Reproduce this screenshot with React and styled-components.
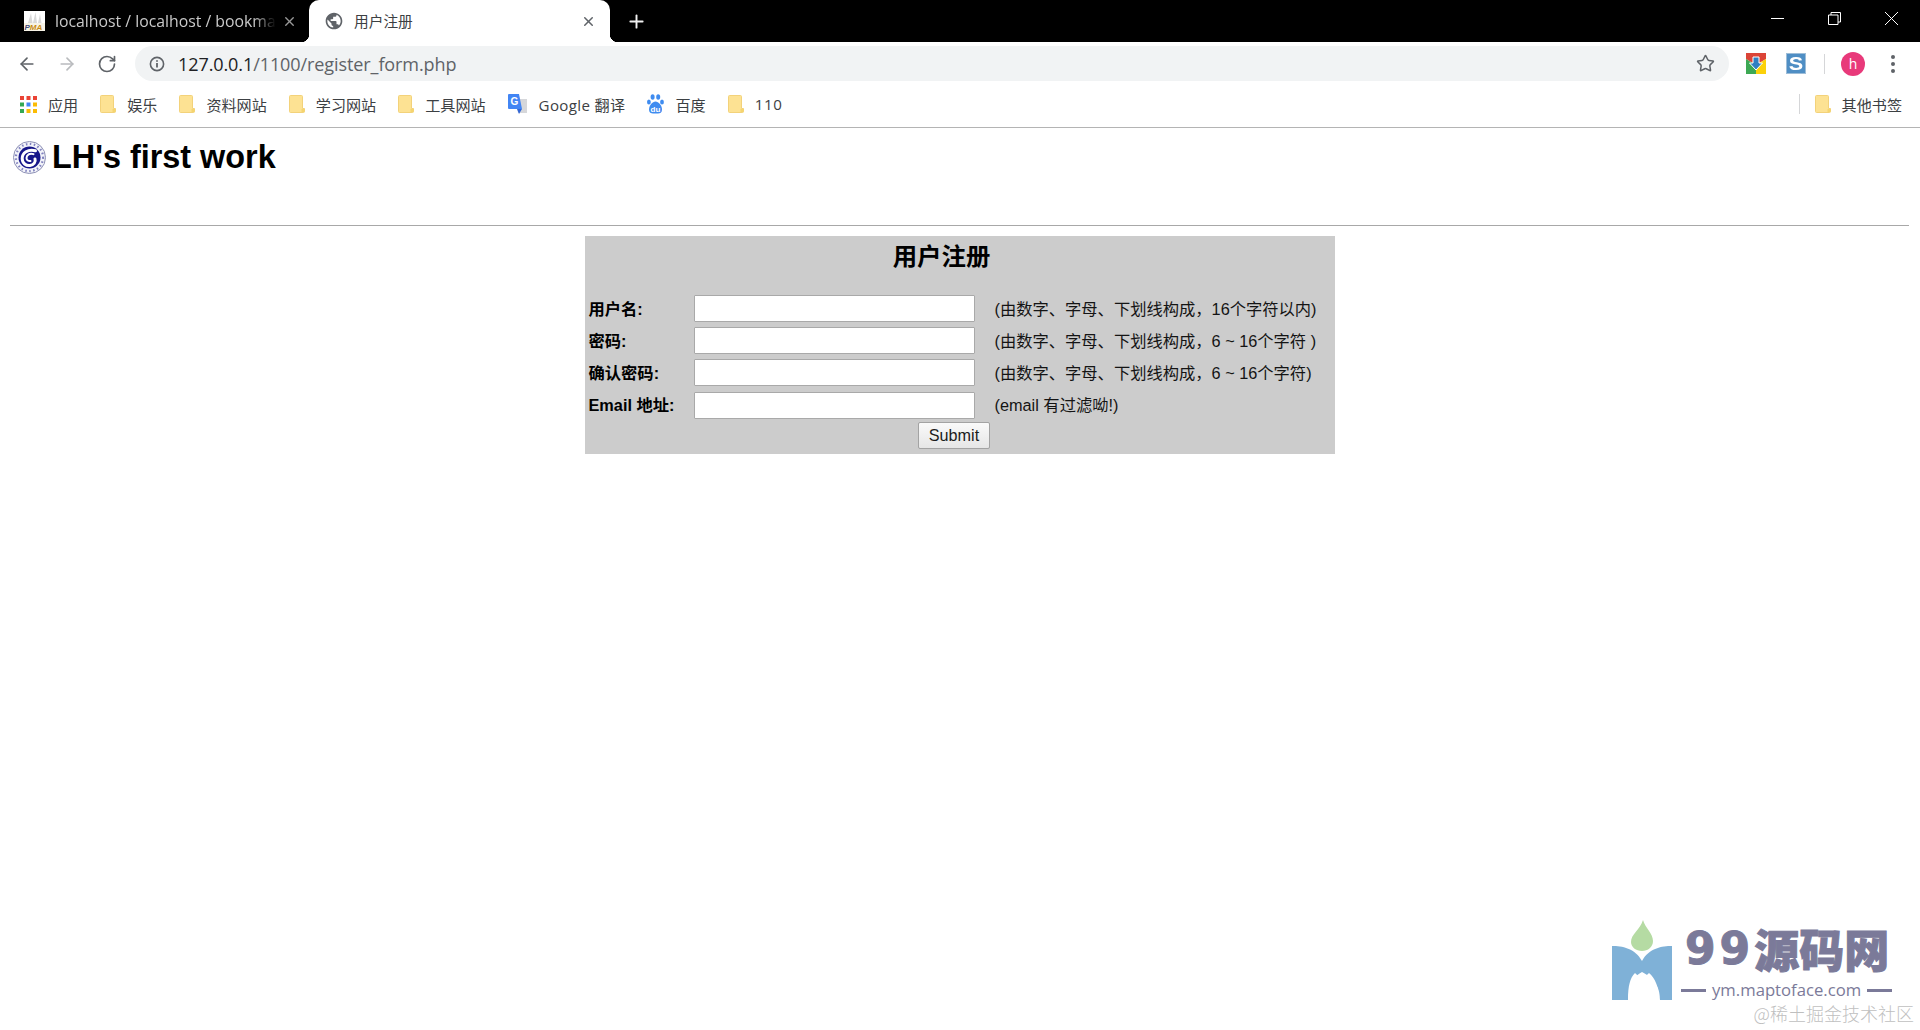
import React from 'react';
import styled, { createGlobalStyle } from 'styled-components';
import { ArrowLeft, ArrowRight, RotateCw, Star, X, Plus } from 'lucide-react';

const Global = createGlobalStyle`
  html, body { margin: 0; padding: 0; background: #fff; }
  * { box-sizing: border-box; }
`;
const UI_FONT = `"Open Sans", "Noto Sans CJK SC", sans-serif`;
const PAGE_FONT = `"Liberation Sans", "Noto Sans CJK SC", sans-serif`;

const Shell = styled.div`position: relative; width: 1920px; height: 1030px; overflow: hidden; background: #fff; font-family: ${PAGE_FONT};`;
const TabStrip = styled.div`display: flex; align-items: stretch; height: 42px; background: #000;`;
const Tab = styled.div`
  position: relative; display: flex; align-items: center; height: 42px; font-family: ${UI_FONT};
  width: ${p => p.$active ? '301px' : '309px'};
  padding: ${p => p.$active ? '0 14px 0 15px' : '0 12px 0 24px'};
  background: ${p => p.$active ? '#fff' : 'transparent'};
  border-radius: ${p => p.$active ? '10px 10px 0 0' : '0'};
  color: ${p => p.$active ? '#3c4043' : '#c9c9c9'};
  ${p => p.$active && `
    &::before, &::after { content: ''; position: absolute; bottom: 0; width: 8px; height: 8px; }
    &::before { left: -8px; background: radial-gradient(circle at 0 0, #000 8px, #fff 8.5px); }
    &::after { right: -8px; background: radial-gradient(circle at 100% 0, #000 8px, #fff 8.5px); }
  `}
`;
const TabTitle = styled.span`
  flex: 1; min-width: 0; margin: 0 ${p => p.$fade ? 6 : 12}px ${p => p.$fade ? 0 : 2}px ${p => p.$gap}px; font-size: ${p => p.$size}px; white-space: nowrap; overflow: hidden;
  ${p => p.$fade && `mask-image: linear-gradient(to right, #000 90%, transparent 100%);`}
`;
const NewTab = styled.div`display: flex; align-items: center; justify-content: center; width: 48px; padding-left: 4px; color: #f1f1f1;`;
const WindowControls = styled.div`display: flex; align-items: center; margin-left: auto; padding: 0 22px 5px 0; gap: 44px; color: #fff;`;
const Toolbar = styled.div`display: flex; align-items: center; height: 43px; padding: 0 25px 0 17px; background: #fff;`;
const NavButtons = styled.div`display: flex; gap: 20px; color: #5f6368;`;
const NavIcon = styled.span`display: flex; width: 20px; height: 20px; color: ${p => p.$muted ? '#b9bbbe' : '#5f6368'};`;
const Address = styled.div`
  flex: 1; display: flex; align-items: center; height: 35px; margin: 0 17px 0 18px; padding: 0 14px 0 14px;
  border-radius: 18px; background: #f1f3f4; font-family: ${UI_FONT}; font-size: 18.05px;
`;
const Url = styled.span`flex: 1; margin-left: 13px; color: #202124; letter-spacing: -.1px; em { font-style: normal; color: #5f6368; }`;
const Extensions = styled.div`display: flex; align-items: center;`;
const ScriptBadge = styled.div`
  width: 20px; height: 21px; margin-left: 20px; display: flex; align-items: center; justify-content: center;
  background: #4f8ec4; border: 1.5px solid #9dbdd8; color: #fff; font: 900 18px/18px "Liberation Sans", sans-serif;
  span { display: block; transform: scale(1.2, 1.05); }
`;
const Divider = styled.div`width: 1px; height: 20px; margin: 0 16px 0 18px; background: #d5d6d8;`;
const Avatar = styled.div`
  width: 24px; height: 24px; border-radius: 50%; background: #e8397a; color: #fff; display: flex; align-items: center;
  justify-content: center; font: 14px/1 ${UI_FONT};
`;
const Kebab = styled.div`
  display: flex; flex-direction: column; gap: 3px; margin-left: 26px;
  span { width: 4px; height: 4px; border-radius: 50%; background: #5f6368; }
`;
const Bookmarks = styled.div`
  display: flex; align-items: center; height: 43px; padding: 0 18px 4px 20px; gap: 22px; background: #fff;
  border-bottom: 1px solid #b4b4b4; font-family: ${UI_FONT}; font-size: 15.1px; color: #3c4043;
`;
const Bookmark = styled.div`display: flex; align-items: center; gap: 11px; white-space: nowrap;`;
const BookmarkEnd = styled.div`display: flex; align-items: center; margin-left: auto; height: 20px; padding-left: 15px; border-left: 1px solid #d5d6d8;`;
const Latin = styled.span`letter-spacing: ${p => p.$spacing}px;`;
const Page = styled.main`padding: 12px 11px 0 10px; color: #000;`;
const Brand = styled.header`display: flex; align-items: center; gap: 6px; height: 35px; padding-left: 3px;`;
const BrandTitle = styled.h1`margin: 0; font-size: 32.4px; line-height: 35px; font-weight: 700;`;
const Rule = styled.hr`margin: 50px 0 0; border: 0; height: 1px; background: #a8a8a8;`;
const Panel = styled.form`
  width: 750px; height: 218px; margin: 10px auto 0; padding: 0 0 0 4px; background: #ccc;
  font-size: 16.3px; line-height: 20px;
`;
const PanelTitle = styled.h2`margin: 0; height: 59px; padding: 6px 40px 0 0; text-align: center; font-size: 24.4px; line-height: 30px; font-weight: 700;`;
const Rows = styled.div`display: grid; grid-template-columns: 105px 281px 1fr; grid-auto-rows: 27px; row-gap: 5.2px; align-items: center;`;
const Label = styled.label`font-weight: 700; white-space: nowrap;`;
const Field = styled.input`width: 281px; height: 27px; padding: 0 3px; background: #fff; border: 1px solid #a9a9a9; border-radius: 1px; outline: none;`;
const Hint = styled.span`padding-left: 20px; white-space: nowrap; color: #141414;`;
const Actions = styled.div`display: flex; justify-content: center; padding: 3px 15px 0 0;`;
const Submit = styled.button`
  width: 72px; height: 27px; padding: 0; border: 1px solid #a3a3a3; border-radius: 2px; background: linear-gradient(#fafafa, #e6e6e6);
  font: 16.2px/1 ${PAGE_FONT}; color: #1c1c1c;
`;
const Watermark = styled.aside`position: absolute; top: 920px; right: 6px; width: 302px;`;
const WatermarkRow = styled.div`display: flex; gap: 9px; align-items: flex-start;`;
const WatermarkBody = styled.div`display: flex; flex-direction: column; padding-top: 4px;`;
const WatermarkName = styled.div`
  display: flex; align-items: center; height: 50px; padding-left: 4px; color: #7b7a99; white-space: nowrap;
  font: 900 45px/50px "Noto Sans CJK SC", sans-serif; -webkit-text-stroke: 1px #7b7a99;
`;
const Nines = styled.span`font: 700 44px/50px "DejaVu Sans", sans-serif; letter-spacing: 4px;`;
const WatermarkUrl = styled.div`display: flex; align-items: center; gap: 6px; margin-top: 6px; font: 16.7px/20px ${UI_FONT}; color: #7b7a99; white-space: nowrap;`;
const Dash = styled.span`width: 25px; height: 3px; background: #7b7a99;`;
const Credit = styled.div`margin-top: 2px; text-align: right; font: 300 18px/22px "Noto Sans CJK SC", sans-serif; color: #bfbfbf;`;

const PmaIcon = () => (
  <svg width="21" height="20" viewBox="0 0 21 20" style={{ flex: 'none' }}>
    <rect width="21" height="20" fill="#fff" />
    <path d="M4 12L7 2l1.500 10zM9 12l2.500-11L13 12zM14 12l2-9 1.500 9z" fill="#d9d9d9" />
    <rect y="12" width="21" height="8" fill="#f7f3e6" />
    <text x="0.500" y="19" fontSize="8" fontWeight="900" fontStyle="italic" fontFamily="Liberation Sans" fill="#3f4a7a">P<tspan fill="#c98a12">MA</tspan></text>
  </svg>
);
const Globe = () => (
  <svg width="20" height="20" viewBox="0 0 24 24" fill="#5f6368" style={{ flex: 'none' }}>
    <path d="M12 2C6.48 2 2 6.48 2 12s4.48 10 10 10 10-4.48 10-10S17.52 2 12 2zm-1 17.93c-3.95-.49-7-3.85-7-7.93 0-.62.08-1.21.21-1.79L9 15v1c0 1.1.9 2 2 2v1.93zm6.9-2.54c-.26-.81-1-1.39-1.9-1.39h-1v-3c0-.55-.45-1-1-1H8v-2h2c.55 0 1-.45 1-1V7h2c1.1 0 2-.9 2-2v-.41c2.93 1.19 5 4.06 5 7.41 0 2.08-.8 3.97-2.1 5.39z" />
  </svg>
);
const InfoIcon = () => (
  <svg width="16" height="16" viewBox="0 0 16 16" fill="none" stroke="#5f6368" style={{ flex: 'none' }}>
    <circle cx="8" cy="8" r="6.6" strokeWidth="1.6" />
    <path d="M8 7v4.4" strokeWidth="1.8" /><path d="M8 4.2v1.6" strokeWidth="1.8" />
  </svg>
);
const Folder = () => (
  <svg width="16" height="18" viewBox="0 0 16 18" style={{ flex: 'none' }}>
    <path d="M.5 1.5Q.5.5 1.5.5h11q1 0 1 1v12h2v3q0 1-1 1h-13q-1 0-1-1z" fill="#fde293" stroke="#f3d27a" />
    <path d="M12.5 14h3v3h-3z" fill="#f5d56f" />
  </svg>
);
const Apps = () => {
  const colors = ['#ea4335', '#ea4335', '#ea4335', '#34a853', '#4285f4', '#fbbc04', '#34a853', '#fbbc04', '#fbbc04'];
  return (
    <svg width="17" height="17" viewBox="0 0 17 17" style={{ flex: 'none' }}>
      {colors.map((c, i) => <rect key={i} x={(i % 3) * 6.5} y={Math.floor(i / 3) * 6.5} width="4" height="4" fill={c} />)}
    </svg>
  );
};
const Translate = () => (
  <svg width="20" height="20" viewBox="0 0 20 20" style={{ flex: 'none' }}>
    <path d="M8 5h11v14H10z" fill="#d6d7da" />
    <path d="M1 0h10l3 15H1q-1 0-1-1V1q0-1 1-1z" fill="#4285f4" />
    <text x="6.5" y="11" fontSize="10" fontWeight="700" fill="#fff" textAnchor="middle" fontFamily="Liberation Sans">G</text>
    <path d="M9 15l2 5 3-5z" fill="#3367d6" />
  </svg>
);
const Paw = () => (
  <svg width="17" height="20" viewBox="0 0 17 20" fill="#3f8cf0" style={{ flex: 'none' }}>
    <ellipse cx="5.6" cy="3" rx="2" ry="2.8" /><ellipse cx="11.2" cy="3" rx="2" ry="2.8" />
    <ellipse cx="1.9" cy="8" rx="1.9" ry="2.5" /><ellipse cx="15" cy="8" rx="1.9" ry="2.5" />
    <path d="M8.5 7.5c3 0 6.5 4 6.5 8 0 3-2 4-4 4H6c-2 0-4-1-4-4 0-4 3.500-8 6.500-8z" />
    <text x="8.5" y="17.500" fontSize="8" fontWeight="700" fill="#fff" textAnchor="middle" fontFamily="Liberation Sans">du</text>
  </svg>
);
const DownloadBadge = () => (
  <svg width="20" height="21" viewBox="0 0 20 21">
    <path d="M0 0h20v6l-10 6L0 6z" fill="#db4437" /><path d="M0 6l10 6v9H0z" fill="#3da854" /><path d="M20 6l-10 6v9h10z" fill="#fbd10a" />
    <path d="M7 4h6v6h3.500L10 17 3.500 10H7z" fill="#2f7fc1" stroke="#fff" strokeWidth="1" />
  </svg>
);
const MinIcon = () => <svg width="13" height="13" viewBox="0 0 13 13" fill="none" stroke="#fff"><path d="M0 6.500h13" /></svg>;
const RestoreIcon = () => <svg width="13" height="13" viewBox="0 0 13 13" fill="none" stroke="#fff"><path d="M.5 3h9.500v9.500H.5z" /><path d="M3 3V.5h9.500V10H10" /></svg>;
const CloseIcon = () => <svg width="13" height="13" viewBox="0 0 13 13" fill="none" stroke="#fff"><path d="M0 0l13 13M13 0L0 13" /></svg>;
const SchoolLogo = () => (
  <svg width="33" height="33" viewBox="0 0 33 33" style={{ flex: 'none' }}>
    <circle cx="16.500" cy="16.500" r="16" fill="#f3f4fa" stroke="#8d90b5" />
    <circle cx="16.500" cy="16.500" r="13.600" fill="none" stroke="#23248c" strokeWidth="2.200" strokeDasharray="1.500 2.500" opacity=".55" />
    <circle cx="16.500" cy="16.500" r="11" fill="#17178a" />
    <path d="M22.500 9.800C15 7.800 9.200 12 9.200 17.500c0 4.800 4 7.500 7.800 7 3.800-.5 6-3.600 5-6.500" fill="none" stroke="#fff" strokeWidth="3" strokeLinecap="round" />
    <path d="M20.500 13.200c-3.800-1.600-7 .8-7 3.800 0 2.200 2.200 3.500 4 3" fill="none" stroke="#fff" strokeWidth="2" strokeLinecap="round" />
  </svg>
);
const MLogo = () => (
  <svg width="60" height="80" viewBox="0 0 60 80" style={{ flex: 'none' }}>
    <path d="M31 0c2 8 10 13 10 21 0 6-5 10-11 10-6 0-11-4-11-9 0-8 9-12 12-22z" fill="#b5dba3" />
    <path d="M0 26c10 0 23 2 30 15 7-13 20-15 30-15v54H48c0-10-3-20-18-28C16 60 18 70 16 80H0z" fill="#7fb1d7" />
    <path d="M16 80c0-14 2-22 7-27 3 3 5 4 7 4s4-1 7-4c6 5 10 14 10 27z" fill="#fff" />
  </svg>
);

const rows = [
  ['用户名:', '(由数字、字母、下划线构成，16个字符以内)', 'text'],
  ['密码:', '(由数字、字母、下划线构成，6 ~ 16个字符 )', 'password'],
  ['确认密码:', '(由数字、字母、下划线构成，6 ~ 16个字符)', 'password'],
  ['Email 地址:', '(email 有过滤呦!)', 'text'],
];
const bookmarks = [
  [<Apps key="a" />, '应用'], [<Folder key="b" />, '娱乐'], [<Folder key="c" />, '资料网站'], [<Folder key="d" />, '学习网站'],
  [<Folder key="e" />, '工具网站'], [<Translate key="f" />, <Latin $spacing={0.35}>Google 翻译</Latin>], [<Paw key="g" />, '百度'],
  [<Folder key="h" />, <Latin $spacing={0.7}>110</Latin>],
];

export default function App() {
  return (
    <Shell>
      <Global />
      <TabStrip>
        <Tab>
          <PmaIcon />
          <TabTitle $gap={10} $size={15.8} $fade>localhost / localhost / bookmark</TabTitle>
          <X size={15} strokeWidth={2.2} color="#9a9a9a" />
        </Tab>
        <Tab $active>
          <Globe />
          <TabTitle $gap={10} $size={14.7}>用户注册</TabTitle>
          <X size={15} strokeWidth={2.4} color="#5f6368" />
        </Tab>
        <NewTab><Plus size={21} strokeWidth={2.2} /></NewTab>
        <WindowControls><MinIcon /><RestoreIcon /><CloseIcon /></WindowControls>
      </TabStrip>
      <Toolbar>
        <NavButtons>
          <NavIcon><ArrowLeft size={20} /></NavIcon>
          <NavIcon $muted><ArrowRight size={20} /></NavIcon>
          <NavIcon><RotateCw size={20} /></NavIcon>
        </NavButtons>
        <Address>
          <InfoIcon />
          <Url>127.0.0.1<em>/1100/register_form.php</em></Url>
          <Star size={19} color="#5f6368" strokeWidth={1.9} />
        </Address>
        <Extensions>
          <DownloadBadge />
          <ScriptBadge><span>S</span></ScriptBadge>
          <Divider />
          <Avatar>h</Avatar>
          <Kebab><span /><span /><span /></Kebab>
        </Extensions>
      </Toolbar>
      <Bookmarks>
        {bookmarks.map(([icon, name], i) => <Bookmark key={i}>{icon}{name}</Bookmark>)}
        <BookmarkEnd><Bookmark><Folder />其他书签</Bookmark></BookmarkEnd>
      </Bookmarks>
      <Page>
        <Brand><SchoolLogo /><BrandTitle>LH's first work</BrandTitle></Brand>
        <Rule />
        <Panel>
          <PanelTitle>用户注册</PanelTitle>
          <Rows>
            {rows.map(([label, hint, type]) => (
              <React.Fragment key={label}>
                <Label>{label}</Label>
                <Field type={type} />
                <Hint>{hint}</Hint>
              </React.Fragment>
            ))}
          </Rows>
          <Actions><Submit type="button">Submit</Submit></Actions>
        </Panel>
      </Page>
      <Watermark>
        <WatermarkRow>
          <MLogo />
          <WatermarkBody>
            <WatermarkName><Nines>99</Nines>源码网</WatermarkName>
            <WatermarkUrl><Dash />ym.maptoface.com<Dash /></WatermarkUrl>
          </WatermarkBody>
        </WatermarkRow>
        <Credit>@稀土掘金技术社区</Credit>
      </Watermark>
    </Shell>
  );
}
